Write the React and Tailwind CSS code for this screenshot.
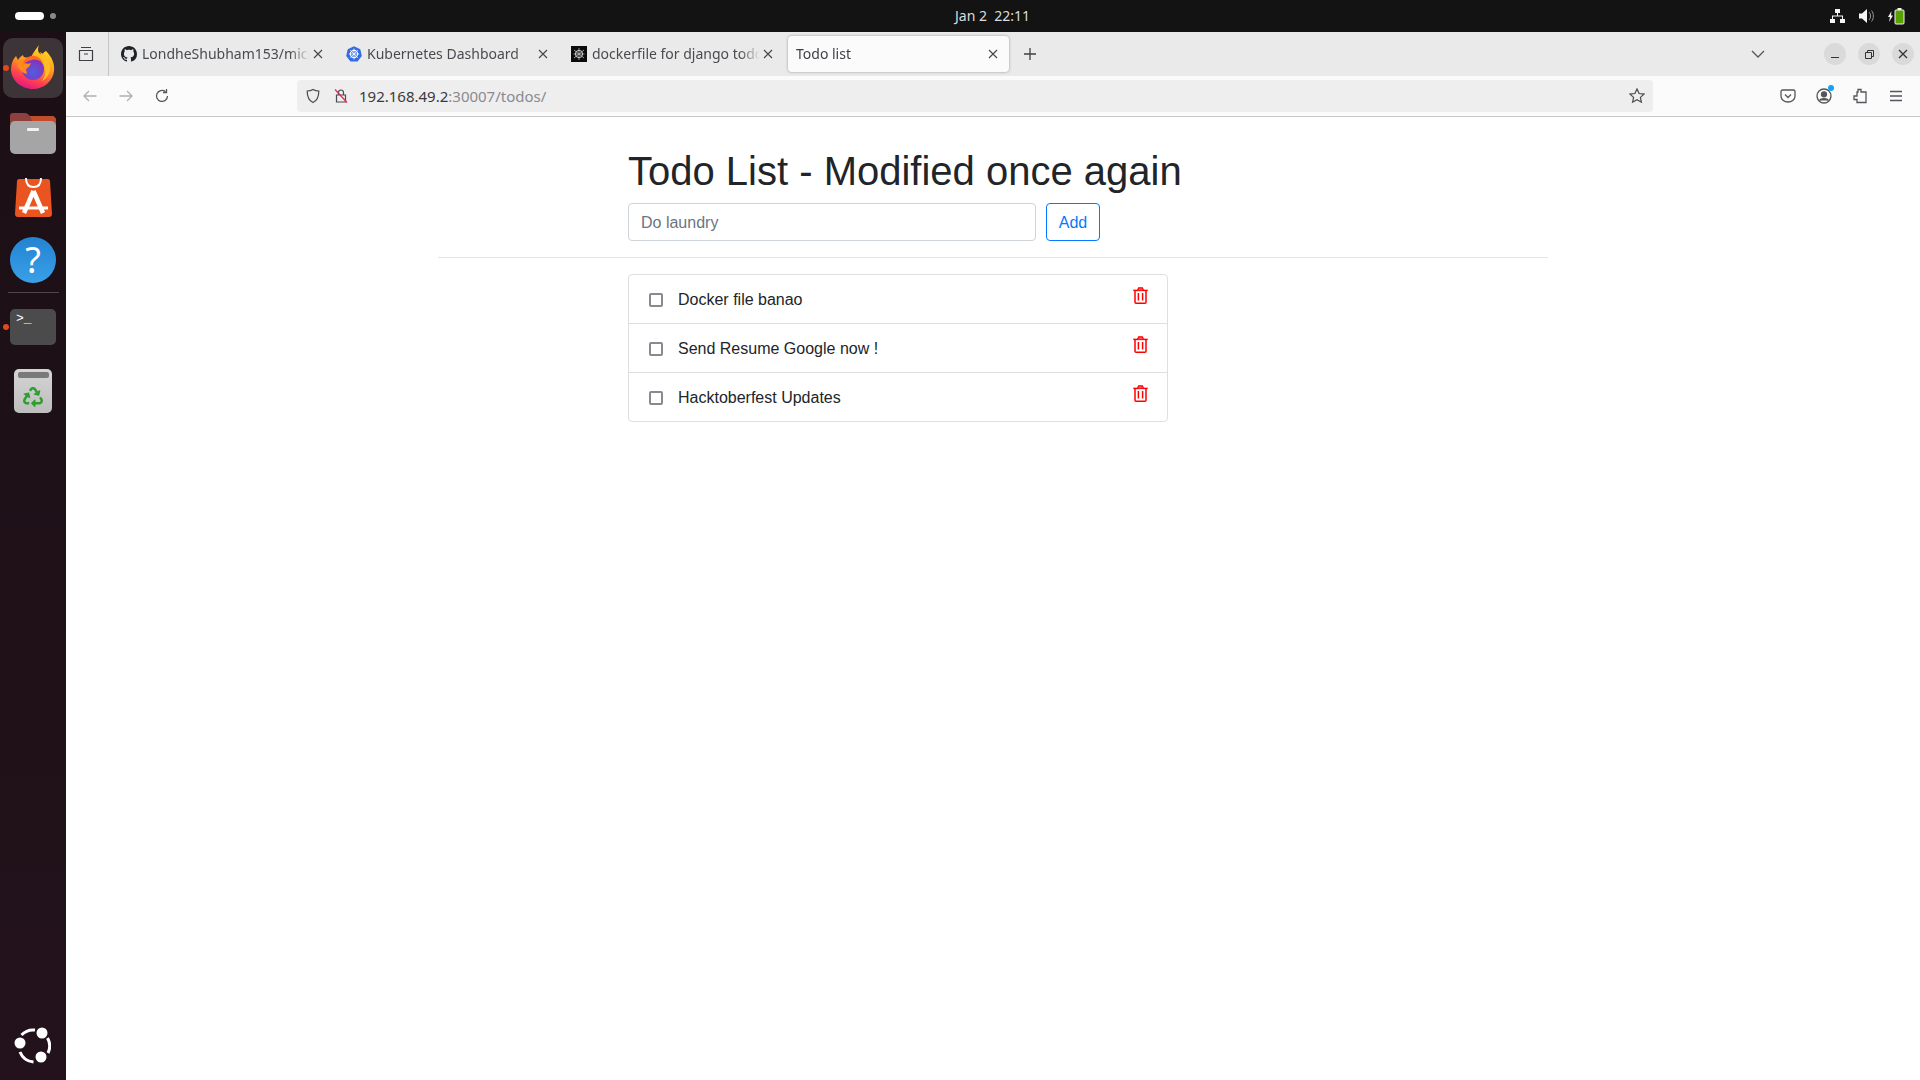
import React from "react";
import { FaRecycle } from "react-icons/fa";

const ui = { fontFamily: '"Noto Sans", sans-serif' };

const Close = ({ className = "" }) => (
  <svg width="10" height="10" viewBox="0 0 10 10" className={className} fill="none" stroke="#44444a" strokeWidth="1.1">
    <path d="M1 1l8 8M9 1l-8 8" />
  </svg>
);

const Github = () => (
  <svg width="16" height="16" viewBox="0 0 16 16" fill="#1f2328" className="shrink-0">
    <path d="M8 0C3.58 0 0 3.58 0 8c0 3.54 2.29 6.53 5.47 7.59.4.07.55-.17.55-.38 0-.19-.01-.82-.01-1.49-2.01.37-2.53-.49-2.69-.94-.09-.23-.48-.94-.82-1.13-.28-.15-.68-.52-.01-.53.63-.01 1.08.58 1.23.82.72 1.21 1.87.87 2.33.66.07-.52.28-.87.51-1.07-1.78-.2-3.64-.89-3.64-3.95 0-.87.31-1.59.82-2.15-.08-.2-.36-1.02.08-2.12 0 0 .67-.21 2.2.82.64-.18 1.32-.27 2-.27s1.36.09 2 .27c1.53-1.04 2.2-.82 2.2-.82.44 1.1.16 1.92.08 2.12.51.56.82 1.27.82 2.15 0 3.07-1.87 3.75-3.65 3.95.29.25.54.73.54 1.48 0 1.07-.01 1.93-.01 2.2 0 .21.15.46.55.38A8.01 8.01 0 0 0 16 8c0-4.42-3.58-8-8-8z" />
  </svg>
);

const K8s = () => (
  <svg width="16" height="16" viewBox="0 0 16 16" className="shrink-0">
    <path d="M8 .3l6.3 3 1.5 6.800-4.300 5.500h-7L.2 10.100l1.500-6.800z" fill="#326ce5" />
    <circle cx="8" cy="8" r="3.600" fill="none" stroke="#fff" strokeWidth="1.100" />
    <path d="M8 2.600v10.800M2.800 8h10.400M4.300 4.300l7.400 7.400M11.700 4.300l-7.400 7.400" stroke="#fff" strokeWidth=".8" />
  </svg>
);

const Bug = () => (
  <svg width="16" height="16" viewBox="0 0 16 16" className="shrink-0">
    <rect width="16" height="16" fill="#0b0b0b" />
    <circle cx="8" cy="8" r="3.600" fill="none" stroke="#d8d8d8" strokeWidth="1" />
    <path d="M8 2v12M3 4l10 8M13 4L3 12M2.500 8h11" stroke="#bdbdbd" strokeWidth=".8" />
  </svg>
);

function Tab({ icon, title, active }) {
  return (
    <div
      className={`w-[221px] h-[36px] shrink-0 flex items-center rounded-[4px] ${
        active ? "-ml-[1px] pl-[8px] pr-[11px] bg-[#fbfbfb] shadow-[0_0_3px_rgba(0,0,0,0.35)]" : "pl-[7px] pr-[12px]"
      }`}
    >
      {icon}
      <span
        className={`flex-1 overflow-hidden whitespace-nowrap text-[14px] leading-[20px] [mask-image:linear-gradient(to_left,transparent,black_20px)] ${
          icon ? "ml-[5px] text-[#4a4a50]" : "text-[#3e3e44]"
        }`}
      >
        {title}
      </span>
      <Close className="ml-[3px] shrink-0" />
    </div>
  );
}

const Trash = () => (
  <svg width="15" height="17" viewBox="0 0 15 17" fill="none" stroke="#ff0000" className="shrink-0">
    <path d="M.3 3.400h14.400" strokeWidth="1.500" />
    <path d="M4.600 3.200l1-2.400h3.800l1 2.400" fill="#ff5a6e" strokeWidth="1.200" />
    <path d="M2 3.600v11.600c0 .6.4 1 1 1h9c.6 0 1-.4 1-1V3.600" strokeWidth="1.500" />
    <path d="M5.400 6v7.600M9.600 6v7.600" strokeWidth="1.500" />
  </svg>
);

function TodoItem({ text, last }) {
  return (
    <div className={`pl-[20px] pr-[20px] flex items-center ${last ? "h-[48px]" : "h-[49px] border-b border-[#dfdfdf]"}`}>
      <span className="w-[14px] h-[14px] mt-[1px] border-2 border-[#8a8891] rounded-[2px] shrink-0" />
      <span className="ml-[15px] pt-[1px] flex-1 text-[16px] leading-[24px] text-[#212529] whitespace-nowrap">{text}</span>
      <span className="mb-[7px] -mr-[1px]">
        <Trash />
      </span>
    </div>
  );
}

const Firefox = () => (
  <svg width="46" height="46" viewBox="0 0 46 46" className="-mt-[2px]">
    <defs>
      <linearGradient id="ff1" x1="0.75" y1="0" x2="0.35" y2="1">
        <stop offset="0" stopColor="#ffe226" />
        <stop offset=".45" stopColor="#ff9a1e" />
        <stop offset=".78" stopColor="#ff3e50" />
        <stop offset="1" stopColor="#e31587" />
      </linearGradient>
      <radialGradient id="ff2" cx=".5" cy=".65" r=".6">
        <stop offset="0" stopColor="#4f5fe0" />
        <stop offset="1" stopColor="#8a2fb8" />
      </radialGradient>
    </defs>
    <path d="M29 1c-2 5-1 8 3 10 1-2 2-3 4-4 6 6 9 13 8 20-1 10-10 18-21 18C11 45 1 36 1 25c0-5 2-10 5-13l2 4c1-2 3-4 5-5 0 3 4 3 8 2 2-4 5-8 8-12z" fill="url(#ff1)" />
    <circle cx="23" cy="25" r="11" fill="url(#ff2)" />
    <path d="M30 8c7 4 11 10 10 18-1 5-4 9-8 11 3-4 4-8 3-13-1-7-3-11-5-16z" fill="#ffbd24" />
    <path d="M6 18c3-2 7-3 11-2l-3 3c3 1 5 1 7 0-1 3-3 5-5 6l1 5c-5-1-9-5-11-12z" fill="#ff8a1e" />
    <path d="M13 19c2-5 7-8 12-7 4 1 6 3 7 6-3-2-7-3-10-2-3 0-6 3-9 3z" fill="#ff6a24" />
  </svg>
);

const Files = () => (
  <svg width="46" height="42" viewBox="0 0 46 42">
    <path d="M0 12V4c0-2 1-3 3-3h12c2 0 3 1 5 3h22c2 0 4 2 4 4v6z" fill="#8f3f3e" />
    <path d="M20 4h22c2 0 4 2 4 4v6H24z" fill="#c24d2c" />
    <rect y="9" width="46" height="33" rx="5" fill="#a5a5a5" />
    <rect x="17" y="16" width="12" height="3" rx="1" fill="#f2f2f2" />
  </svg>
);

const Software = () => (
  <svg width="37" height="42" viewBox="0 0 37 42">
    <path d="M2 6c0-1 1-2 2-2h29c1 0 2 1 2 2l2 33c0 2-1 3-3 3H3c-2 0-3-1-3-3z" fill="#e95420" />
    <path d="M11 3c0 6 3 9 7.500 9S26 9 26 3" fill="none" stroke="#fff" strokeWidth="2" />
    <path d="M18.500 16L9 38M18.500 16L28 38" stroke="#fff" strokeWidth="4.500" fill="none" />
    <path d="M4 33h29" stroke="#fff" strokeWidth="3" />
  </svg>
);

const Help = () => (
  <div className="w-[46px] h-[46px] rounded-full bg-gradient-to-b from-[#2383d2] to-[#3aa0e8] flex items-center justify-center">
    <span className="text-[36px] leading-none text-white" style={ui}>?</span>
  </div>
);

const Terminal = () => (
  <div className="w-[46px] h-[36px] rounded-[5px] bg-[#4b4b4b] flex items-start pl-[6px] pt-[1px]">
    <span className="text-[13px] leading-[18px] text-white font-['Liberation_Mono',monospace]">&gt;_</span>
  </div>
);

const Recycle = () => (
  <div className="w-[38px] h-[44px] rounded-[5px] bg-gradient-to-b from-[#d5d5d5] to-[#bdbdbd] flex flex-col items-center pt-[3px]">
    <div className="w-[31px] h-[6px] rounded-[2px] bg-[#7a7a7a]" />
    <FaRecycle size={20} color="#2f9e2f" className="mt-[9px]" />
  </div>
);

const UbuntuLogo = () => (
  <svg width="38" height="38" viewBox="0 0 38 38">
    <path d="M8.500 8A16 16 0 0 1 22 3" stroke="#fff" strokeWidth="3" fill="none" />
    <path d="M34.500 11a16 16 0 0 1 .5 15" stroke="#fff" strokeWidth="3" fill="none" />
    <path d="M7 25a16 16 0 0 0 13.500 10" stroke="#fff" strokeWidth="3" fill="none" />
    <circle cx="29" cy="6" r="5.500" fill="#fff" />
    <circle cx="7" cy="16" r="5.500" fill="#fff" />
    <circle cx="28" cy="30" r="5.500" fill="#fff" />
  </svg>
);

const Dot = () => <span className="absolute left-[3px] top-1/2 -mt-[3px] w-[6px] h-[6px] rounded-full bg-[#e0481e]" />;

const nav = { width: 16, height: 16, fill: "none", stroke: "#55555b", strokeWidth: 1.3, viewBox: "0 0 16 16" };

export default function App() {
  return (
    <div className="w-[1920px] h-[1080px] flex flex-col overflow-hidden bg-white" style={ui}>
      <div className="h-[32px] shrink-0 bg-[#131313] flex items-center relative">
        <div className="ml-[15px] w-[29px] h-[8px] rounded-full bg-white" />
        <div className="ml-[6px] w-[6px] h-[6px] rounded-full bg-[#8a8a8a]" />
        <div className="absolute left-[955px] top-0 h-[30px] flex items-center text-[14px] text-[#dcdcdc] whitespace-pre">Jan 2  22:11</div>
        <div className="ml-auto mr-[15px] flex items-center gap-[14px]">
          <svg width="15" height="14" viewBox="0 0 15 14" fill="#f5f5f5">
            <rect x="5" y="0" width="5" height="4" />
            <rect x="0" y="10" width="5" height="4" />
            <rect x="10" y="10" width="5" height="4" />
            <path d="M7 4h1v2.500h5V10h-1V7.500H3V10H2V6.500h5z" />
          </svg>
          <svg width="15" height="14" viewBox="0 0 15 14" fill="#f5f5f5">
            <path d="M0 4.500h3L8 0v14L3 9.500H0z" />
            <path d="M10 3c2 2 2 6 0 8M12.500 1.500c2.500 3 2.500 8 0 11" fill="none" stroke="#9a9a9a" strokeWidth="1" />
          </svg>
          <svg width="17" height="17" viewBox="0 0 17 17">
            <path d="M3.500 3L0 9h2l-1 5 4-6.500H3z" fill="#f5f5f5" />
            <rect x="7" y="2" width="9" height="14" rx="1" fill="#5aa000" stroke="#f5f5f5" />
            <rect x="9.500" y="0" width="4" height="2" fill="#f5f5f5" />
          </svg>
        </div>
      </div>

      <div className="flex-1 flex min-h-0">
        <div className="w-[66px] shrink-0 bg-gradient-to-b from-[#1b0f15] to-[#23121b] flex flex-col items-center relative">
          <div className="relative w-full flex justify-center mt-[6px]">
            <div className="w-[60px] h-[60px] rounded-[10px] bg-[#3d3438] flex items-center justify-center">
              <Firefox />
            </div>
            <Dot />
          </div>
          <div className="mt-[14px]"><Files /></div>
          <div className="mt-[21px]"><Software /></div>
          <div className="mt-[20px]"><Help /></div>
          <div className="mt-[9px] w-[51px] h-px bg-[#4f464b]" />
          <div className="relative w-full flex justify-center mt-[16px]">
            <Terminal />
            <Dot />
          </div>
          <div className="mt-[24px]"><Recycle /></div>
          <div className="mt-auto mb-[15px] -ml-[2px]"><UbuntuLogo /></div>
        </div>

        <div className="flex-1 min-w-0 flex flex-col">
          <div className="h-[44px] shrink-0 bg-[#eaeaea] flex items-center relative">
            <svg width="16" height="16" viewBox="0 0 16 16" fill="none" stroke="#3f3f45" strokeWidth="1.200" className="ml-[12px]">
              <path d="M3 1.500h10M1.500 4.500h13v10h-13zM6 8h4" />
            </svg>
            <div className="ml-[14px] w-px h-full bg-[#c4c4c4]" />
            <div className="ml-[5px] flex items-center gap-[4px]">
              <Tab icon={<Github />} title="LondheShubham153/microservices" />
              <Tab icon={<K8s />} title="Kubernetes Dashboard" />
              <Tab icon={<Bug />} title="dockerfile for django todo app" />
              <Tab title="Todo list" active />
            </div>
            <svg width="14" height="14" viewBox="0 0 14 14" stroke="#3f3f45" strokeWidth="1.300" className="ml-[14px]">
              <path d="M7 1v12M1 7h12" />
            </svg>
            <svg width="14" height="8" viewBox="0 0 14 8" fill="none" stroke="#55555b" strokeWidth="1.300" className="ml-auto mr-[59px]">
              <path d="M1 1l6 6 6-6" />
            </svg>
            <div className="mr-[6px] flex items-center gap-[12px]">
              <div className="w-[22px] h-[22px] rounded-full bg-[#dadada] flex items-center justify-center">
                <div className="w-[8px] h-px bg-[#333] mt-[6px]" />
              </div>
              <div className="w-[22px] h-[22px] rounded-full bg-[#dadada] flex items-center justify-center">
                <svg width="9" height="9" viewBox="0 0 9 9" fill="none" stroke="#333" strokeWidth="1">
                  <path d="M2.500 2.500V.5h6v6h-2M.5 2.500h6v6h-6z" />
                </svg>
              </div>
              <div className="w-[22px] h-[22px] rounded-full bg-[#dadada] flex items-center justify-center">
                <svg width="10" height="10" viewBox="0 0 10 10" fill="none" stroke="#333" strokeWidth="1.300">
                  <path d="M1 1l8 8M9 1l-8 8" />
                </svg>
              </div>
            </div>
          </div>

          <div className="h-[41px] shrink-0 bg-[#fbfbfb] border-b border-[#c8c8c8] flex items-center">
            <svg {...nav} className="ml-[16px]" stroke="#b0b0b4"><path d="M14.500 8H2M7 3L2 8l5 5" /></svg>
            <svg {...nav} className="ml-[20px]" stroke="#b0b0b4"><path d="M1.500 8H14M9 3l5 5-5 5" /></svg>
            <svg {...nav} className="ml-[20px]">
              <path d="M13.500 8A5.500 5.500 0 1 1 11.500 3.700" />
              <path d="M12.500 1v3.500H9" />
            </svg>
            <div className="ml-[127px] w-[1356px] h-[32px] rounded-[4px] bg-[#eeeeee] flex items-center">
              <svg width="16" height="16" viewBox="0 0 16 16" fill="none" stroke="#4a4a50" strokeWidth="1.200" className="ml-[8px]">
                <path d="M8 1.500c2 1.200 3.800 1.500 5.800 1.500 0 5-1.300 9.500-5.800 11.500C3.500 12.500 2.200 8 2.200 3 4.200 3 6 2.700 8 1.500z" />
              </svg>
              <svg width="16" height="16" viewBox="0 0 16 16" fill="none" className="ml-[12px]">
                <path d="M5.500 6.500V4.500a2.500 2.500 0 0 1 5 0v2M3.500 7h9v7h-9z" stroke="#4a4a50" strokeWidth="1.200" />
                <path d="M2 1.500l12 13" stroke="#e22850" strokeWidth="1.200" />
              </svg>
              <span className="ml-[10px] mb-[1px] text-[15px] leading-[20px] whitespace-nowrap text-[#3a3a40]">
                192.168.49.2<span className="text-[#8a8a90]">:30007/todos/</span>
              </span>
              <svg width="16" height="16" viewBox="0 0 16 16" fill="none" stroke="#4a4a50" strokeWidth="1.200" className="ml-auto mr-[8px]">
                <path d="M8 1l2.100 4.500 4.900.6-3.600 3.300 1 4.800L8 11.800l-4.400 2.400 1-4.800L1 6.100l4.900-.6z" />
              </svg>
            </div>
            <svg {...nav} className="ml-[127px]" viewBox="0 0 16 16">
              <path d="M2.500 2h11c.8 0 1.500.7 1.500 1.500V8c0 3.500-3 6-7 6s-7-2.500-7-6V3.500C1 2.700 1.700 2 2.500 2z" />
              <path d="M5 6.500L8 9.500l3-3" />
            </svg>
            <div className="ml-[20px] relative">
              <svg {...nav}>
                <circle cx="8" cy="8" r="7" />
                <circle cx="8" cy="6.300" r="2.500" fill="#55555b" />
                <path d="M3.700 12.500c1-2.500 7.600-2.500 8.600 0" fill="#55555b" />
              </svg>
              <span className="absolute -top-[3px] -right-[2px] w-[6px] h-[6px] rounded-full bg-[#10a5f5]" />
            </div>
            <svg {...nav} className="ml-[20px]">
              <path d="M6 1.500h3v2.500h5v10.500H5v-3H2V8h3V4h1z" />
            </svg>
            <svg {...nav} className="ml-[20px]"><path d="M2 3.500h12M2 8h12M2 12.500h12" /></svg>
          </div>

          <div className="flex-1 font-['Liberation_Sans',Arial,sans-serif] pt-[30px] pl-[372px] pr-[372px]">
            <h1 className="ml-[190px] text-[40px] leading-[48px] font-normal text-[#212529] mb-[8px] whitespace-nowrap">Todo List - Modified once again</h1>
            <div className="ml-[190px] flex">
              <div className="w-[408px] h-[38px] px-[12px] pt-[1px] flex items-center border border-[#ced4da] rounded-[4px] bg-white text-[16px] text-[#6c757d]">Do laundry</div>
              <div className="ml-[10px] w-[54px] h-[38px] pt-[1px] flex items-center justify-center border border-[#007bff] rounded-[4px] text-[16px] text-[#007bff]">Add</div>
            </div>
            <div className="mt-[16px] mb-[16px] h-px bg-[#e3e5e7]" />
            <div className="ml-[190px] w-[540px] border border-[#dfdfdf] rounded-[4px]">
              <TodoItem text="Docker file banao" />
              <TodoItem text="Send Resume Google now !" />
              <TodoItem text="Hacktoberfest Updates" last />
            </div>
          </div>
        </div>
      </div>
    </div>
  );
}
